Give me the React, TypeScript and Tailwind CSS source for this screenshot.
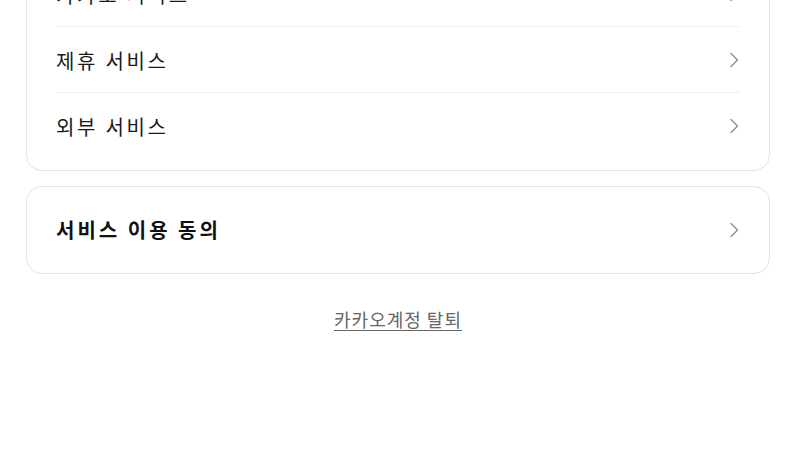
const font = { fontFamily: '"Noto Sans CJK KR", "Noto Sans", sans-serif' }

function Chevron() {
  return (
    <svg width="10" height="16" viewBox="0 0 10 16" className="text-[#888] mr-[1px]" fill="none">
      <path d="M2 1.5 L8.5 8 L2 14.5" stroke="currentColor" strokeWidth="1.2" strokeLinecap="round" strokeLinejoin="round" />
    </svg>
  )
}

function Row({ label, last }: { label: string; last?: boolean }) {
  return (
    <div
      className={`flex items-center justify-between h-[66px] ${last ? '' : 'border-b border-[#f0f0f0]'}`}
    >
      <span className="pt-[2px] text-[20px] tracking-[2.7px] text-[#1a1a1a]">{label}</span>
      <Chevron />
    </div>
  )
}

export default function App() {
  return (
    <div className="w-[800px] h-[450px] overflow-hidden bg-white" style={font}>
      <div className="pl-[26px] pr-[30px] -mt-[40px]">
        {/* 서비스 목록 */}
        <div className="rounded-2xl border border-[#e3e3e3] px-[29px] pb-[11px]">
          <Row label="카카오 서비스" />
          <Row label="제휴 서비스" />
          <Row label="외부 서비스" last />
        </div>

        {/* 동의 */}
        <div className="mt-[15px] rounded-2xl border border-[#e3e3e3] px-[29px] h-[88px] flex items-center justify-between">
          <span className="text-[20px] font-bold tracking-[3px] text-[#111]">서비스 이용 동의</span>
          <Chevron />
        </div>

        <div className="mt-[32px] flex justify-center">
          <button className="text-[18px] tracking-[1px] text-[#666] underline underline-offset-[3px]">카카오계정 탈퇴</button>
        </div>
      </div>
    </div>
  )
}
